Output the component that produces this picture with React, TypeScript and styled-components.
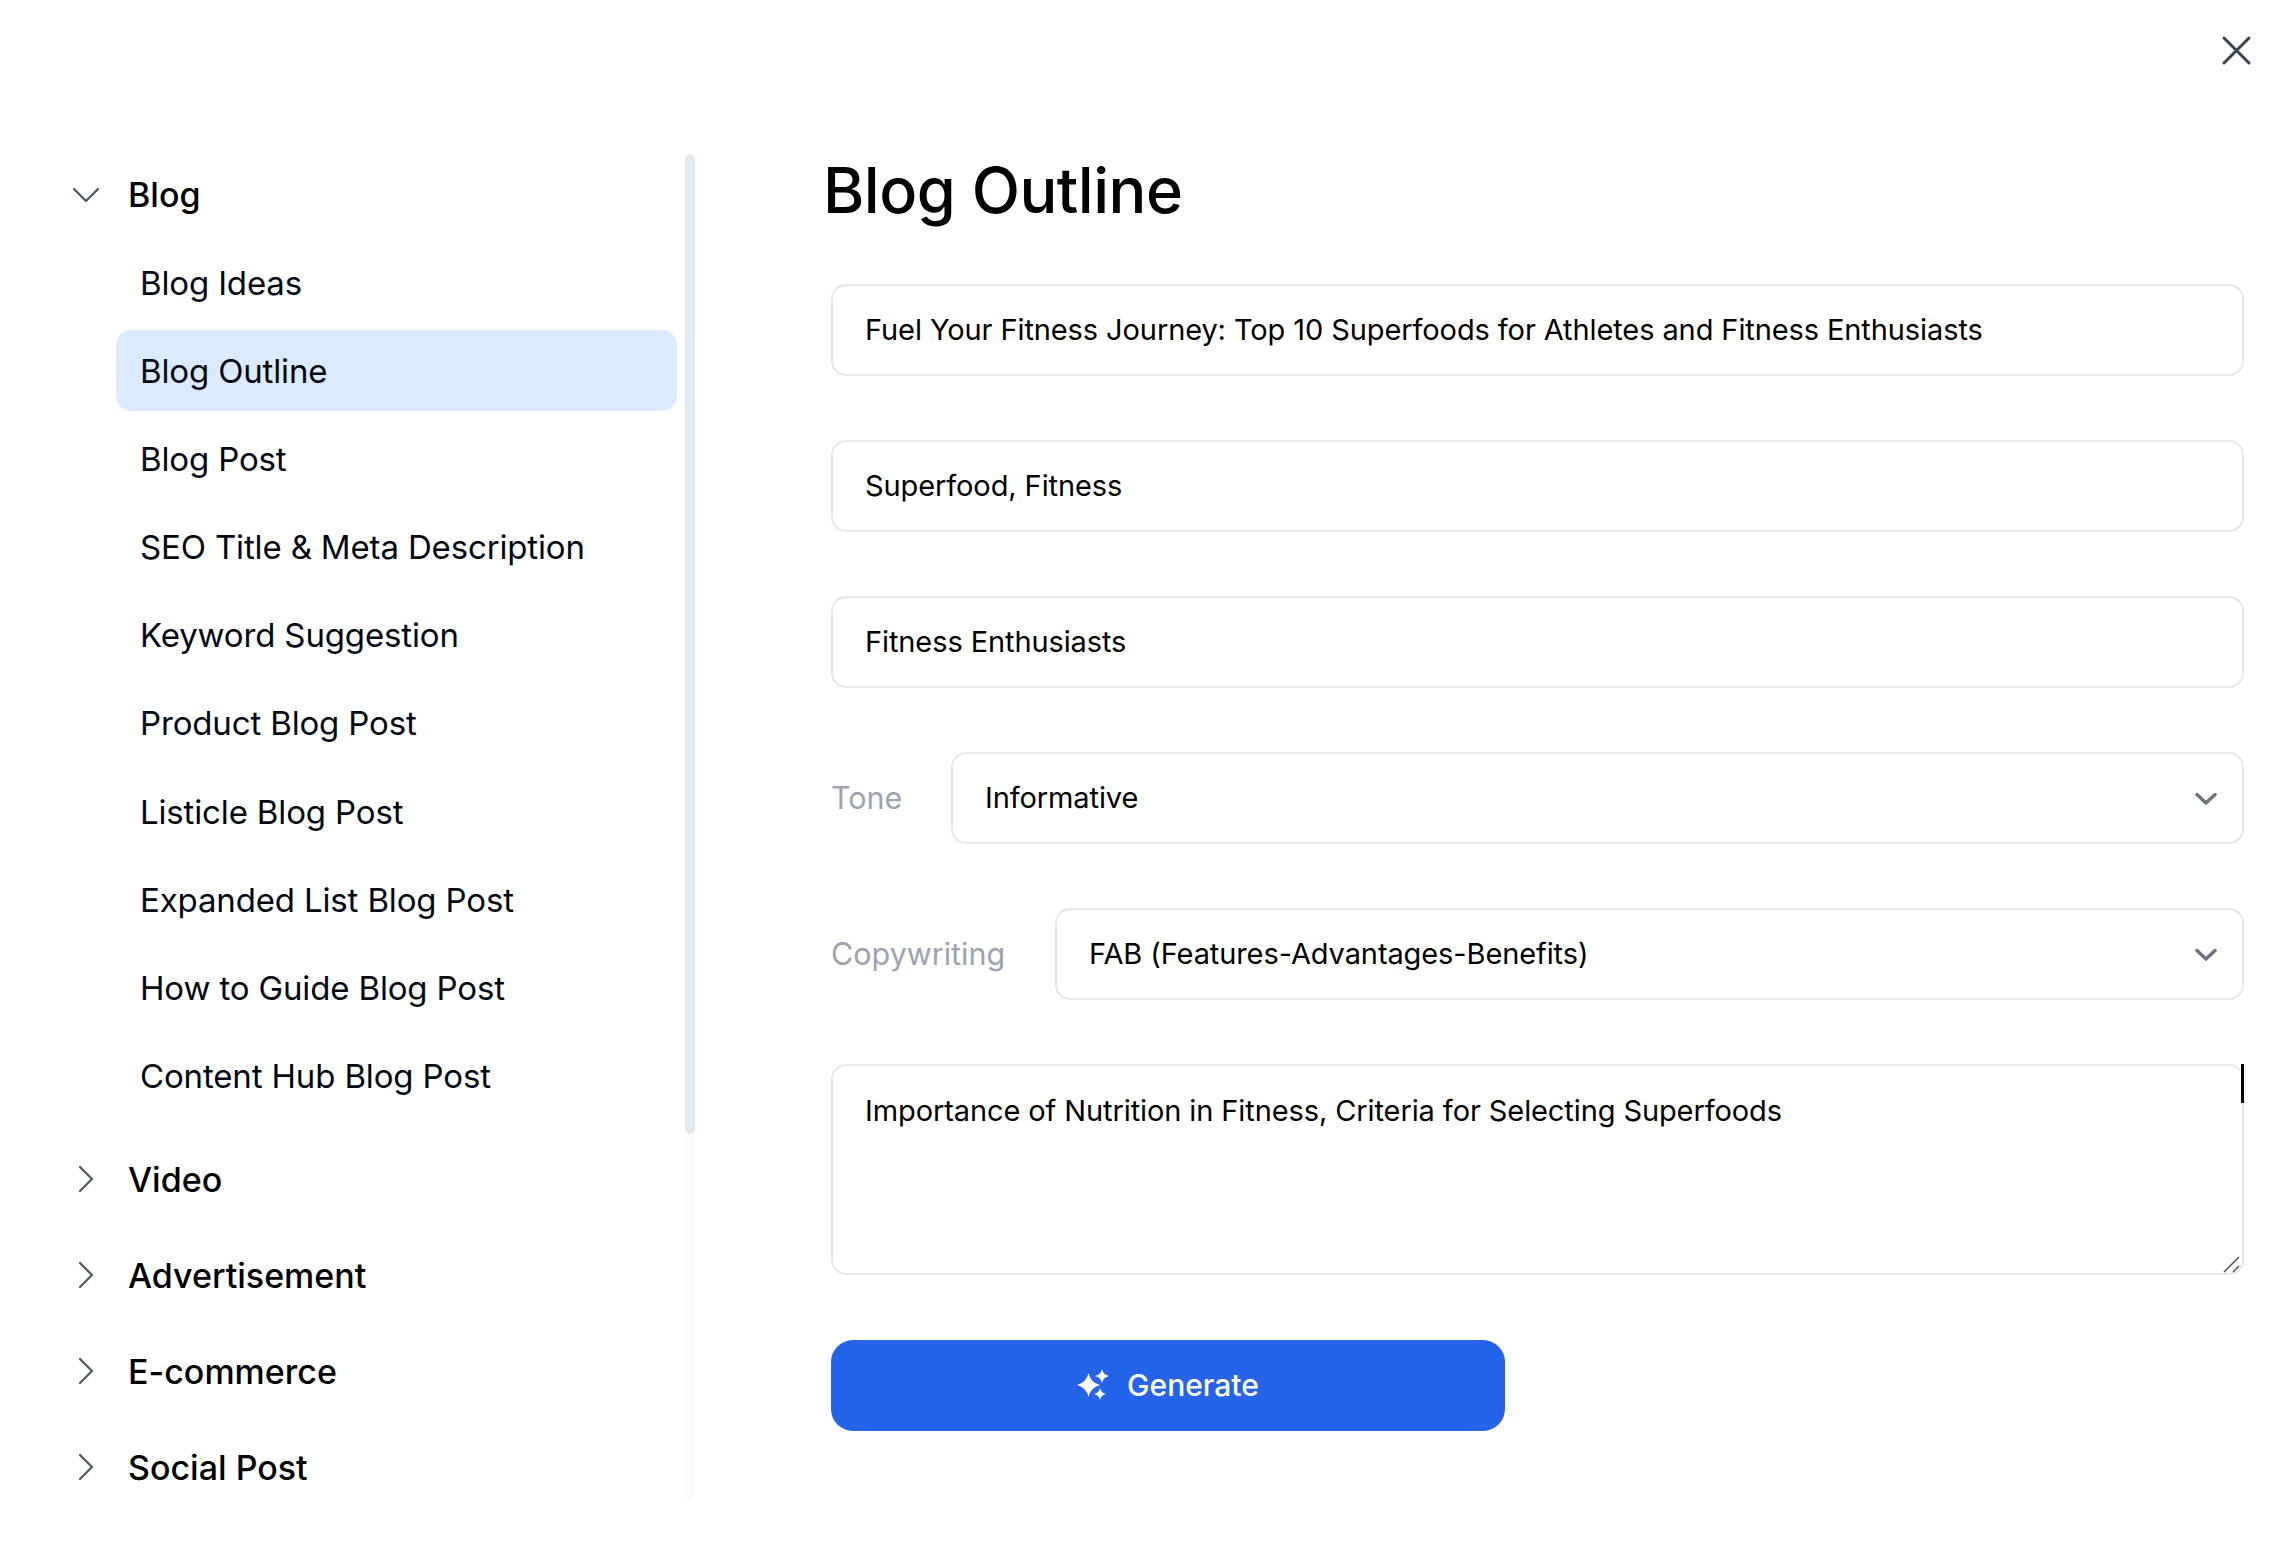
import React from "react";
import styled, { createGlobalStyle } from "styled-components";

const GlobalStyle = createGlobalStyle`
  html, body { margin: 0; padding: 0; background: #fff; }
  body { font-family: Inter, "Liberation Sans", sans-serif; color: #030712; }
  * { box-sizing: border-box; }
`;

const Page = styled.div`
  position: relative;
  width: 2294px;
  height: 1546px;
  display: flex;
  overflow: hidden;
  background: #fff;
`;

const CloseButton = styled.button`
  position: absolute;
  top: 34px;
  right: 41px;
  width: 33px;
  height: 33px;
  padding: 0;
  border: 0;
  background: none;
  color: #374151;
  display: flex;
`;

const Sidebar = styled.aside`
  flex: 0 0 695px;
  height: 1346px;
  margin-top: 154px;
  padding-left: 64px;
  display: flex;
  gap: 8px;
`;

const Nav = styled.nav`
  flex: 1;
  display: flex;
  flex-direction: column;
  gap: 15px;
  overflow: hidden;
`;

const Group = styled.div`
  flex: 0 0 auto;
`;

const GroupRow = styled.div`
  flex: 0 0 81px;
  height: 81px;
  display: flex;
  align-items: center;
  gap: 20px;
  font-size: 34px;
  font-weight: 500;
  color: #000;
`;

const GroupIcon = styled.span`
  width: 44px;
  display: flex;
  justify-content: center;
  color: #4b5563;
`;

const ItemList = styled.div`
  margin: 7px 0 7px 52px;
  display: flex;
  flex-direction: column;
  gap: 7.2px;
`;

const Item = styled.div<{ $active?: boolean }>`
  flex: 0 0 81px;
  padding-left: 24px;
  display: flex;
  align-items: center;
  border-radius: 15px;
  font-size: 33px;
  letter-spacing: -0.15px;
  background: ${(p) => (p.$active ? "#dbeafe" : "transparent")};
`;

const ScrollTrack = styled.div`
  flex: 0 0 10px;
  border-radius: 5px;
  background: #fbfbfc;
  overflow: hidden;
`;

const ScrollThumb = styled.div`
  height: 980px;
  border-radius: 5px;
  background: #e2e8f0;
`;

const Main = styled.main`
  flex: 0 0 1421px;
  margin-left: 128px;
  padding-top: 145px;
`;

const Title = styled.h1`
  margin: 0 0 49px;
  height: 90px;
  line-height: 90px;
  font-size: 63px;
  font-weight: 500;
  color: #000;
  letter-spacing: -0.5px;
`;

const Form = styled.form`
  padding-left: 8px;
  display: flex;
  flex-direction: column;
  gap: 64.5px;
`;

const Field = styled.div`
  flex: 1 0 auto;
  height: 91.5px;
  padding: 0 32px;
  display: flex;
  align-items: center;
  justify-content: space-between;
  border: 2.5px solid #e5e7eb;
  border-radius: 15px;
  font-size: 29px;
  letter-spacing: -0.1px;
  color: #000;
  background: #fff;
`;

const Row = styled.div`
  display: flex;
  align-items: center;
`;

const Label = styled.span<{ $width: number }>`
  flex: 0 0 ${(p) => p.$width}px;
  font-size: 30.5px;
  color: #9ca3af;
`;

const NotesBox = styled.div`
  position: relative;
  display: flex;
`;

const Notes = styled.textarea`
  width: 100%;
  height: 211px;
  padding: 25px 32px;
  border: 2.5px solid #e5e7eb;
  border-radius: 15px;
  font-family: inherit;
  font-size: 29px;
  letter-spacing: -0.1px;
  line-height: 40px;
  color: #000;
  outline: none;
  resize: none;
`;

const Caret = styled.span`
  position: absolute;
  top: 0;
  right: 0;
  width: 3px;
  height: 39px;
  background: #000;
`;

const Grip = styled.svg`
  position: absolute;
  right: 3px;
  bottom: 2px;
`;

const GenerateButton = styled.button`
  width: 674px;
  height: 91.5px;
  border: 0;
  border-radius: 22px;
  display: flex;
  align-items: center;
  justify-content: center;
  gap: 17px;
  background: #2563eb;
  color: #fff;
  font-family: inherit;
  font-size: 30px;
  font-weight: 500;
`;

const SelectArrow = styled.svg`
  margin: 2px -7px 0 0;
`;

const groups = ["Video", "Advertisement", "E-commerce", "Social Post"];
const blogItems = [
  "Blog Ideas",
  "Blog Outline",
  "Blog Post",
  "SEO Title & Meta Description",
  "Keyword Suggestion",
  "Product Blog Post",
  "Listicle Blog Post",
  "Expanded List Blog Post",
  "How to Guide Blog Post",
  "Content Hub Blog Post",
];

const ChevronDown = () => (
  <svg width="28" height="16" viewBox="0 0 28 16" fill="none" stroke="currentColor" strokeWidth="2.2" strokeLinecap="round" strokeLinejoin="round">
    <path d="M2 2l12 12L26 2" />
  </svg>
);

const ChevronRight = () => (
  <svg width="16" height="28" viewBox="0 0 16 28" fill="none" stroke="currentColor" strokeWidth="2.2" strokeLinecap="round" strokeLinejoin="round">
    <path d="M2 2l12 12L2 26" />
  </svg>
);

const SelectChevron = () => (
  <SelectArrow width="22" height="14" viewBox="0 0 22 14" fill="none" stroke="#6b7280" strokeWidth="3.4" strokeLinecap="round" strokeLinejoin="round">
    <path d="M2 2.5l9 8.5 9-8.5" />
  </SelectArrow>
);

const Sparkles = () => (
  <svg width="33" height="32" viewBox="0 0 33 32" fill="#fff">
    <path d="M11.500 4Q13.500 13.500 23 16 13.500 18.500 11.500 28 9.500 18.500 0 16 9.500 13.500 11.500 4z" />
    <path d="M25 0Q26.200 5.800 32 7 26.200 8.200 25 14 23.800 8.200 18 7 23.800 5.800 25 0z" />
    <path d="M23 19Q24 24 29 25 24 26 23 31 22 26 17 25 22 24 23 19z" />
  </svg>
);

export default function App() {
  return (
    <Page>
      <GlobalStyle />
      <CloseButton aria-label="Close">
        <svg width="33" height="33" viewBox="0 0 33 33" fill="none" stroke="currentColor" strokeWidth="3" strokeLinecap="round">
          <path d="M4 4l25 25M29 4L4 29" />
        </svg>
      </CloseButton>

      <Sidebar>
        <Nav>
          <Group>
            <GroupRow>
              <GroupIcon>
                <ChevronDown />
              </GroupIcon>
              Blog
            </GroupRow>
            <ItemList>
              {blogItems.map((name) => (
                <Item key={name} $active={name === "Blog Outline"}>
                  {name}
                </Item>
              ))}
            </ItemList>
          </Group>
          {groups.map((name) => (
            <GroupRow key={name}>
              <GroupIcon>
                <ChevronRight />
              </GroupIcon>
              {name}
            </GroupRow>
          ))}
        </Nav>
        <ScrollTrack>
          <ScrollThumb />
        </ScrollTrack>
      </Sidebar>

      <Main>
        <Title>Blog Outline</Title>
        <Form>
          <Field>Fuel Your Fitness Journey: Top 10 Superfoods for Athletes and Fitness Enthusiasts</Field>
          <Field>Superfood, Fitness</Field>
          <Field>Fitness Enthusiasts</Field>
          <Row>
            <Label $width={120}>Tone</Label>
            <Field>
              Informative
              <SelectChevron />
            </Field>
          </Row>
          <Row>
            <Label $width={224}>Copywriting</Label>
            <Field>
              FAB (Features-Advantages-Benefits)
              <SelectChevron />
            </Field>
          </Row>
          <NotesBox>
            <Notes defaultValue="Importance of Nutrition in Fitness, Criteria for Selecting Superfoods" />
            <Caret />
            <Grip width="18" height="18" viewBox="0 0 18 18" fill="none" stroke="#555" strokeWidth="1.5">
              <path d="M1 17L16 2M10 17l6-6" />
            </Grip>
          </NotesBox>
          <GenerateButton type="button">
            <Sparkles />
            Generate
          </GenerateButton>
        </Form>
      </Main>
    </Page>
  );
}
